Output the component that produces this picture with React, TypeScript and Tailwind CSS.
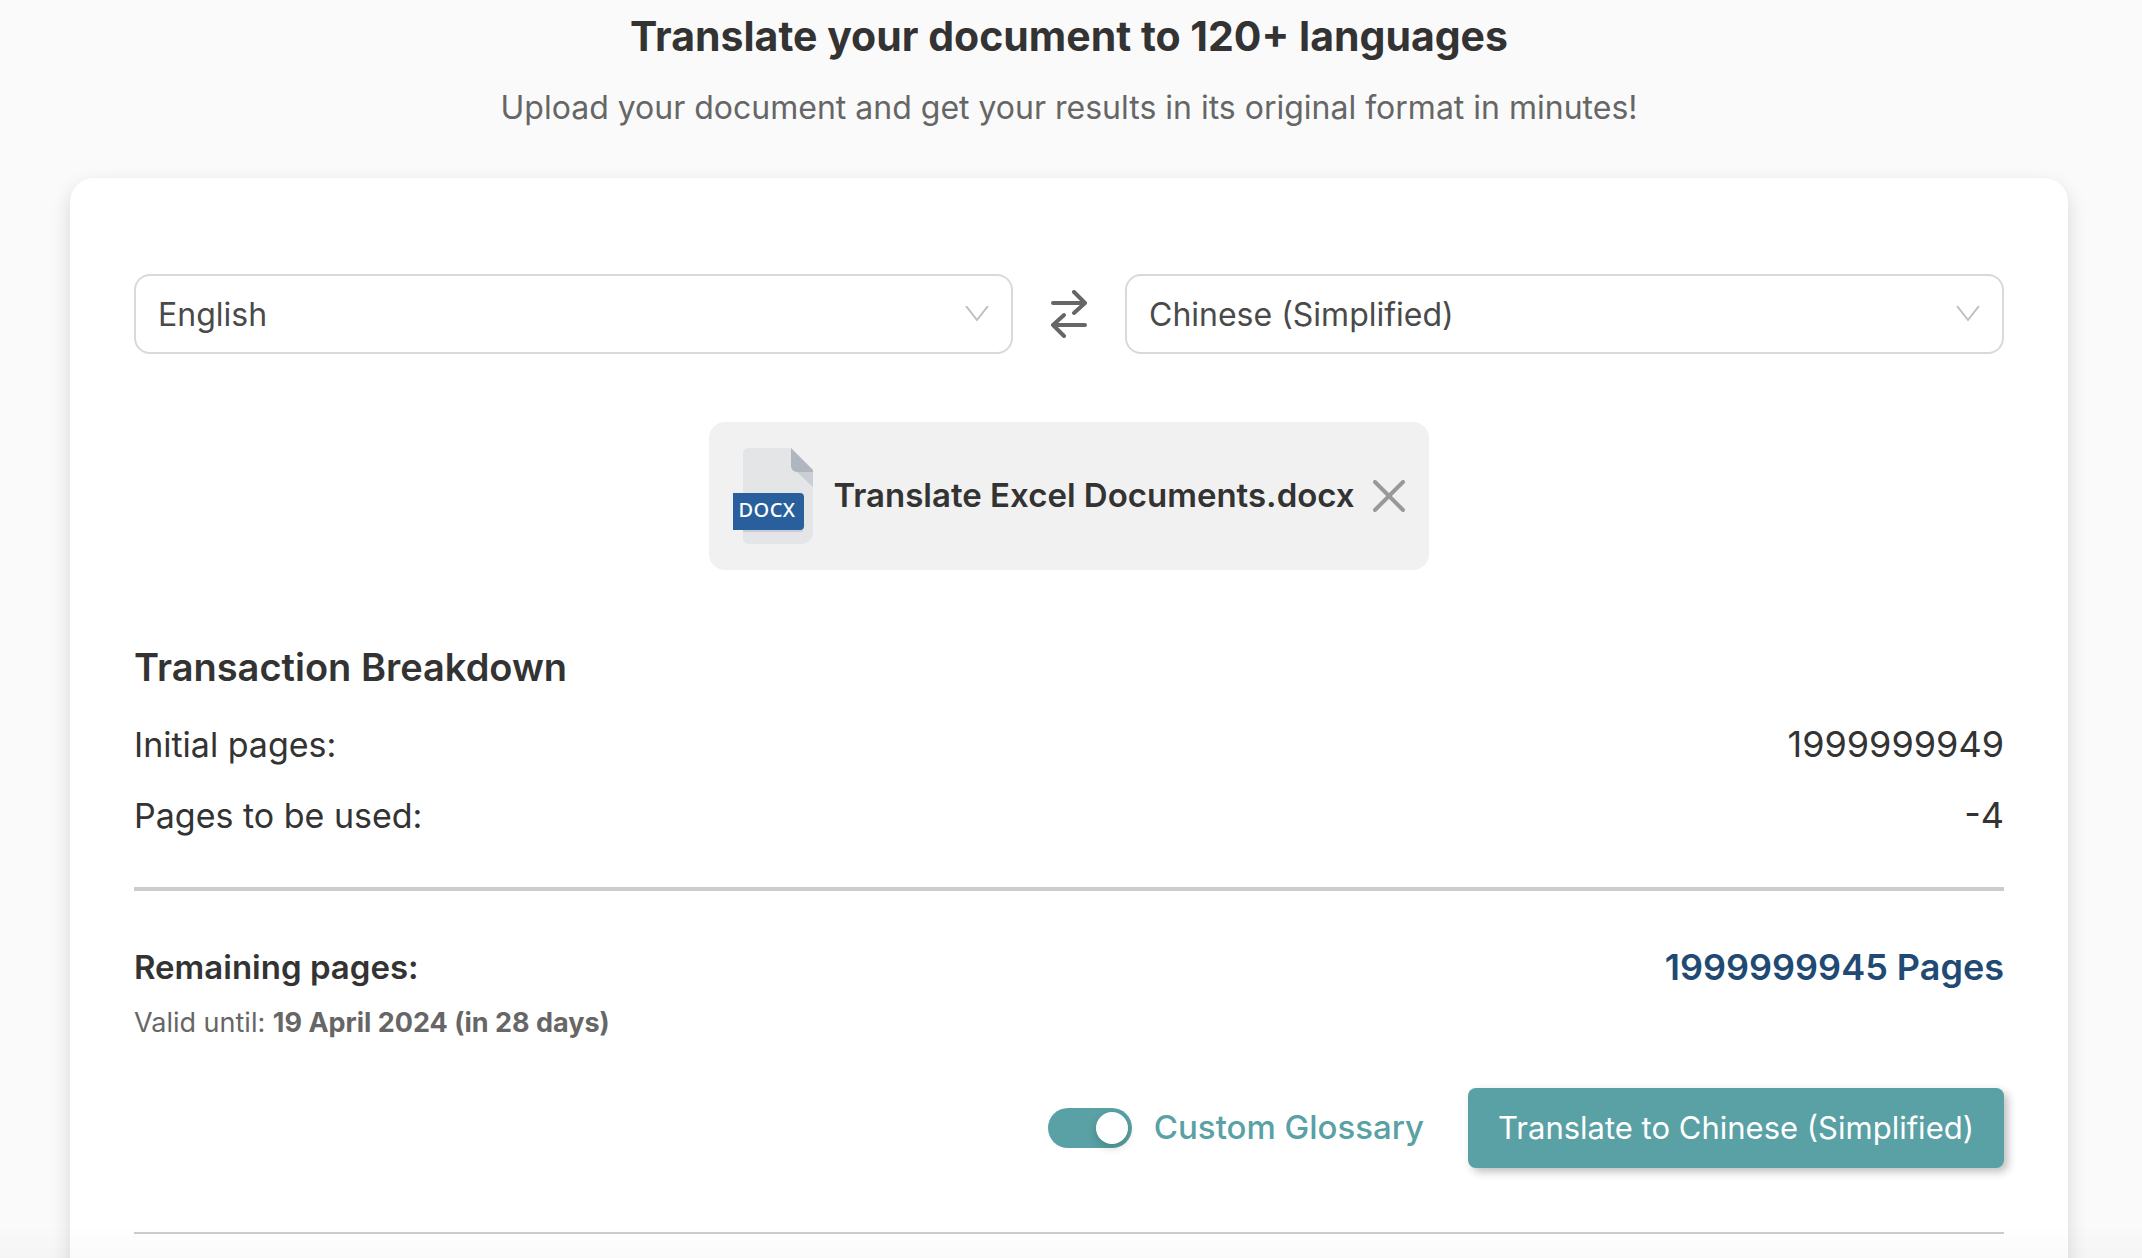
import { FC, useState } from "react";

const languages = ["English", "Chinese (Simplified)", "French", "German", "Spanish"];

type SelectProps = {
  label: string;
  value: string;
  onChange: (value: string) => void;
};

const LanguageSelect: FC<SelectProps> = ({ label, value, onChange }) => {
  return (
    <div className="relative flex-1">
      <select
        aria-label={label}
        value={value}
        onChange={(e) => onChange(e.target.value)}
        className="h-20 w-full appearance-none rounded-2xl border-2 border-[#d9d9d9] bg-white pl-[22px] pr-16 pt-0.5 text-[32px] text-[#4a4a4a]"
      >
        {languages.map((language) => (
          <option key={language}>{language}</option>
        ))}
      </select>
      <svg
        className="pointer-events-none absolute right-6 top-8 h-4 w-6"
        viewBox="0 0 24 16"
        fill="none"
        stroke="#bfbfbf"
        strokeWidth={2}
      >
        <path d="M1 0L12 14L23 0" />
      </svg>
    </div>
  );
};

const SwapIcon: FC = () => {
  return (
    <svg
      className="h-12 w-9"
      viewBox="0 0 36 48"
      fill="none"
      stroke="#666666"
      strokeWidth={4}
      strokeLinecap="round"
      strokeLinejoin="round"
    >
      <path d="M2 13H34M23 2L34 13L23 23" />
      <path d="M34 35H2M13 25L2 35L13 46" />
    </svg>
  );
};

const DocxIcon: FC = () => {
  return (
    <svg className="h-24 w-20" viewBox="0 0 80 96">
      <path
        d="M15 0H58L80 22V84A12 12 0 0 1 68 96H15A5 5 0 0 1 10 91V5A5 5 0 0 1 15 0Z"
        fill="#e3e5e7"
      />
      <path d="M64 24H80V39Z" fill="#caced7" />
      <path d="M58 0L80 22V24H64A6 6 0 0 1 58 18Z" fill="#b0b6bd" />
      <path d="M10 81H70L69 84H10Z" fill="#c6ced8" />
      <path d="M0 45H67A4 4 0 0 1 71 49V78A4 4 0 0 1 67 82H0Z" fill="#295f9c" />
      <text
        x="34"
        y="69"
        textAnchor="middle"
        className="fill-white font-['Noto_Sans',sans-serif] text-[20px] font-medium tracking-wide"
      >
        DOCX
      </text>
    </svg>
  );
};

const App: FC = () => {
  const [source, setSource] = useState("English");
  const [target, setTarget] = useState("Chinese (Simplified)");
  const [glossary, setGlossary] = useState(true);

  const swap = () => {
    setSource(target);
    setTarget(source);
  };

  return (
    <div className="h-screen overflow-hidden bg-[#fafafa] pl-[70px] pr-[74px] font-['Inter','Liberation_Sans',sans-serif] text-[#333333]">
      <header className="pt-2 text-center">
        <h1 className="text-[41px] font-bold leading-14">
          Translate your document to 120+ languages
        </h1>
        <p className="mt-5 text-[32px] leading-12 text-[#666666]">
          Upload your document and get your results in its original format in minutes!
        </p>
      </header>

      <main className="mt-[46px] h-screen rounded-3xl bg-white px-16 pt-24 shadow-[0_8px_20px_rgba(0,0,0,0.14)]">
        <div className="flex items-center">
          <LanguageSelect label="Source language" value={source} onChange={setSource} />
          <button aria-label="Swap languages" onClick={swap} className="mx-[38px]">
            <SwapIcon />
          </button>
          <LanguageSelect label="Target language" value={target} onChange={setTarget} />
        </div>

        <div className="mx-auto mt-[68px] flex h-[148px] w-fit items-center rounded-2xl bg-[#f1f1f1] px-6">
          <DocxIcon />
          <span className="ml-5 text-[33px] font-semibold">Translate Excel Documents.docx</span>
          <button aria-label="Remove file" className="ml-[18px]">
            <svg
              className="size-8"
              viewBox="0 0 32 32"
              stroke="#999999"
              strokeWidth={4}
              strokeLinecap="round"
            >
              <path d="M2 2L30 30M30 2L2 30" />
            </svg>
          </button>
        </div>

        <section>
          <h2 className="mt-[73px] text-[38px] font-semibold leading-12">Transaction Breakdown</h2>
          <dl className="mt-[18px] leading-[71px]">
            <div className="flex justify-between">
              <dt className="text-[34px]">Initial pages:</dt>
              <dd className="text-[36px]">1999999949</dd>
            </div>
            <div className="flex justify-between">
              <dt className="text-[34px]">Pages to be used:</dt>
              <dd className="text-[36px]">-4</dd>
            </div>
          </dl>
          <hr className="mt-9 border-t-4 border-[#cccccc]" />
          <div className="mt-[52px] flex justify-between leading-12 font-semibold">
            <span className="text-[33px]">Remaining pages:</span>
            <span className="text-[36px] text-[#204a74]">1999999945 Pages</span>
          </div>
          <p className="mt-3 text-[27px] leading-10 text-[#666666]">
            Valid until: <strong className="font-bold">19 April 2024 (in 28 days)</strong>
          </p>
        </section>

        <div className="mt-[45px] flex items-center justify-end">
          <label className="flex items-center text-[33px] font-medium text-[#59a1a5]">
            <input
              type="checkbox"
              role="switch"
              checked={glossary}
              onChange={(e) => setGlossary(e.target.checked)}
              className="mr-[22px] h-10 w-[84px] appearance-none rounded-full bg-gray-400 p-1 before:block before:size-8 before:rounded-full before:bg-white before:shadow-[0_4px_8px_rgba(0,35,11,0.2)] checked:bg-[#59a1a5] checked:before:ml-11"
            />
            Custom Glossary
          </label>
          <button className="ml-11 h-20 rounded-lg bg-[#59a1a5] px-[30px] text-[31px] text-white shadow-[4px_4px_8px_rgba(0,0,0,0.25)]">
            Translate to {target}
          </button>
        </div>

        <hr className="mt-16 border-t-2 border-[#cccccc]" />
      </main>

      <div className="pointer-events-none fixed inset-x-0 bottom-0 h-8 bg-linear-to-b from-transparent to-black/2" />
    </div>
  );
};

export default App;
